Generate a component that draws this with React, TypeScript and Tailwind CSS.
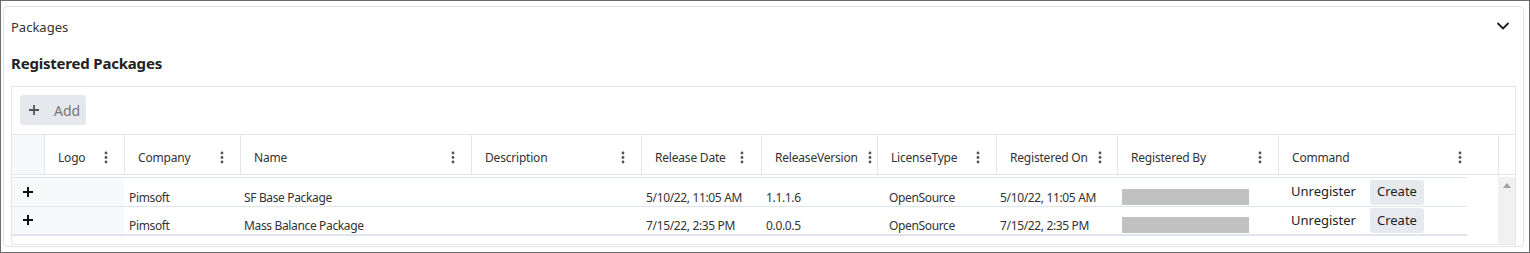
import React from "react";
import { ChevronDown } from "lucide-react";

const font = "font-['Noto_Sans',sans-serif]";

const columns = [
  { label: "Logo", w: "w-[80px]", pr: "pr-[16px]" },
  { label: "Company", w: "w-[116px]", pr: "pr-[16px]" },
  { label: "Name", w: "w-[231px]", pr: "pr-[16px]" },
  { label: "Description", w: "w-[170px]", pr: "pr-[16px]" },
  { label: "Release Date", w: "w-[120px]", pr: "pr-[17px]" },
  { label: "ReleaseVersion", w: "w-[116px]", pr: "pr-[9px]" },
  { label: "LicenseType", w: "w-[119px]", pr: "pr-[16px]" },
  { label: "Registered On", w: "w-[121px]", pr: "pr-[17px]" },
  { label: "Registered By", w: "w-[161px]", pr: "pr-[16px]" },
  { label: "Command", w: "w-[220px]", pr: "pr-[36px]" },
];

const rows = [
  { company: "Pimsoft", name: "SF Base Package", date: "5/10/22, 11:05 AM", version: "1.1.1.6", license: "OpenSource", on: "5/10/22, 11:05 AM" },
  { company: "Pimsoft", name: "Mass Balance Package", date: "7/15/22, 2:35 PM", version: "0.0.0.5", license: "OpenSource", on: "7/15/22, 2:35 PM" },
];

const cell = "flex items-end text-[12px] leading-[16px] tracking-[-0.35px] whitespace-nowrap";

const Kebab = () => (
  <svg width="4" height="13" viewBox="0 0 4 13" className="shrink-0">
    <circle cx="2" cy="2" r="1.4" fill="#555" />
    <circle cx="2" cy="6.5" r="1.4" fill="#555" />
    <circle cx="2" cy="11" r="1.4" fill="#555" />
  </svg>
);

const Plus = ({ color, size, stroke }: { color: string; size: number; stroke: number }) => (
  <svg width={size} height={size} viewBox="0 0 10 10">
    <path d="M5 0v10M0 5h10" stroke={color} strokeWidth={stroke} />
  </svg>
);

export default function App() {
  return (
    <div className={`w-[1530px] h-[253px] border border-[#6b6b6b] bg-white ${font} text-[#333]`}>
      <div className="ml-[2px] mt-[5px] w-[1521px] h-[241px] rounded-[4px] border border-[#e4e4e4] shadow-[0_0_2px_rgba(0,0,0,0.06)] flex flex-col">
        <div className="flex items-center justify-between pl-[7px] pr-[10px] pt-[11px] h-[29px]">
          <span className="text-[13px] leading-[18px] text-[#333]">Packages</span>
          <ChevronDown size={20} strokeWidth={2.2} className="text-[#1f1f1f] -mt-[2px]" />
        </div>
        <div className="pl-[7px] mt-[17px] text-[15px] font-bold leading-[20px] tracking-[-0.2px] text-[#222]">Registered Packages</div>
        <div className="ml-[7px] mt-[13px] w-[1505px] h-[159px] border border-[#e6e6e6] flex flex-col">
          <div className="h-[48px] border-b border-[#e3e7ec] pl-[8px] pt-[8px] shrink-0">
            <button className="h-[30px] w-[66px] rounded-[3px] bg-[#e5e8ec] flex items-center pl-[9px] gap-[15px]">
              <Plus color="#555" size={10} stroke={1.8} />
              <span className="text-[14px] text-[#777]">Add</span>
            </button>
          </div>
          <div className="h-[40px] border-b border-[#e3e7ec] flex shrink-0">
            <div className="w-[32px] bg-[#f8f9fa]" />
            {columns.map((c) => (
              <div key={c.label} className={`${c.w} ${c.pr} border-l border-[#e3e7ec] pl-[13px] pt-[6px] flex items-center gap-[10px]`}>
                <span className="flex-1 text-[12px] tracking-[-0.2px] text-[#333] whitespace-nowrap">{c.label}</span>
                <Kebab />
              </div>
            ))}
            <div className="flex-1 border-l border-[#e3e7ec]" />
          </div>
          <div className="flex flex-1 pt-[2px]">
            <div className="w-[1455px] flex flex-col">
              {rows.map((r, i) => (
                <div key={i} className={`flex border-[#dfe5ec] ${i === 0 ? "h-[30px] border-t border-b" : "h-[29px] border-b-2"}`}>
                  <div className="w-[112px] bg-[#f8f9fa] flex items-center pl-[11px] pb-[1px]">
                    <Plus color="#111" size={10} stroke={2} />
                  </div>
                  <div className={`w-[116px] pl-[5px] ${cell}`}>{r.company}</div>
                  <div className={`w-[231px] pl-[4px] ${cell}`}>{r.name}</div>
                  <div className="w-[170px]" />
                  <div className={`w-[120px] pl-[5px] ${cell}`}>{r.date}</div>
                  <div className={`w-[116px] pl-[5px] ${cell}`}>{r.version}</div>
                  <div className={`w-[119px] pl-[12px] ${cell}`}>{r.license}</div>
                  <div className={`w-[121px] pl-[4px] ${cell}`}>{r.on}</div>
                  <div className="w-[161px] pl-[5px] flex items-end pb-[1px]">
                    <div className="w-[127px] h-[16px] bg-[#c1c1c1]" />
                  </div>
                  <div className="flex-1 pl-[13px] flex items-center gap-[14px]">
                    <span className="text-[13px] text-[#222]">Unregister</span>
                    <span className="h-[25px] px-[7px] rounded-[3px] bg-[#e6e9ee] text-[13px] text-[#222] flex items-center">Create</span>
                  </div>
                </div>
              ))}
            </div>
            <div className="flex-1" />
            <div className="w-[17px] bg-[#f1f1f1] flex justify-center pt-[6px]">
              <svg width="8" height="5" viewBox="0 0 8 5">
                <path d="M0 5L4 0L8 5Z" fill="#a3a3a3" />
              </svg>
            </div>
          </div>
        </div>
      </div>
    </div>
  );
}
